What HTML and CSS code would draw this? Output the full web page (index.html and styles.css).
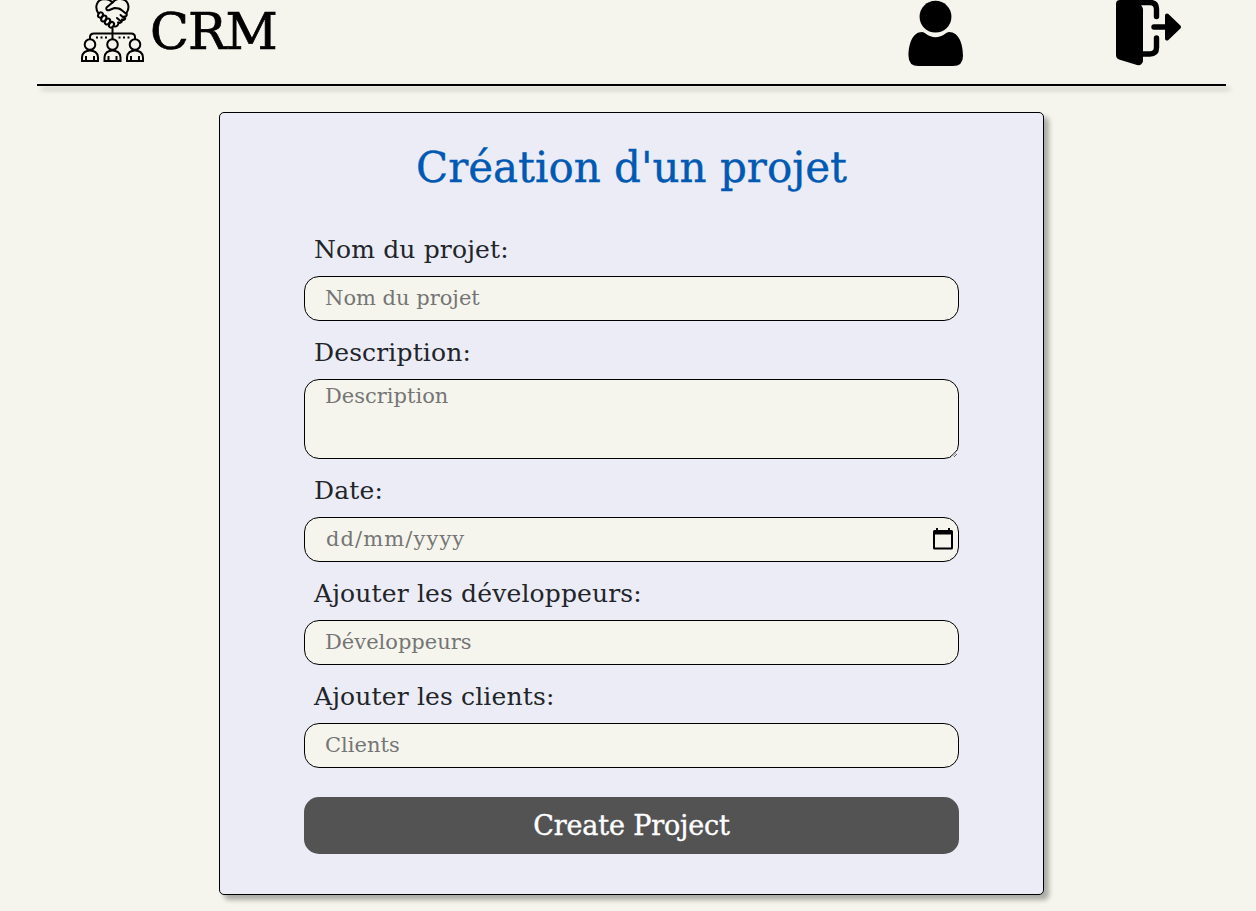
FILE: index.html
```html
<!DOCTYPE html>
<html lang="fr">
<head>
<meta charset="utf-8">
<title>CRM</title>
<link rel="stylesheet" href="styles.css">
</head>
<body>
<header class="header">
  <a class="brand">
    <svg class="brand-icon" width="66" height="66" viewBox="0 0 66 66" fill="none" stroke="#000" stroke-width="2" stroke-linecap="round" stroke-linejoin="round">
      <path d="M19.500 13.500C15 7 18-.5 25-1c4 0 6 1 8.500 3.500C36-.5 39-1.500 42-1c7 .5 9.500 8 5.500 14"/>
      <path d="M33.500 2.500l-6 5c-1 2 1 3.500 3 2.500l5-2c3 0 5 0 7 2l5 4M47.500 13.500c1 2-.5 3.500-2.500 3M46 16.500c1 3-1 4-3 3M43 19.500c.5 3-2 4-4 3M39.500 22.500c0 3-2 4.500-4.500 4M41.500 15l3.500 3M38 18l3.500 3"/>
      <ellipse cx="21.500" cy="15" rx="2.200" ry="2.800" transform="rotate(35 21.500 15)"/>
      <ellipse cx="24.800" cy="18.500" rx="2.200" ry="3.200" transform="rotate(35 24.800 18.500)"/>
      <ellipse cx="28.500" cy="21.500" rx="2.200" ry="3.200" transform="rotate(35 28.500 21.500)"/>
      <ellipse cx="32.500" cy="24.800" rx="2.200" ry="3" transform="rotate(35 32.500 24.800)"/>
      <path d="M33.500 28v11M11 39v-2q0-3.500 4-3.500h37q4 0 4 3.500v2"/>
      <path d="M17 37.500h11.500M39.500 37.500h11.500" stroke-dasharray="2 2.500" stroke-linecap="butt"/>
      <g id="person">
        <circle cx="11" cy="44.500" r="5.300"/>
        <path d="M3 61v-3.500c0-9.500 16-9.500 16 0V61zM7 56v5M15 56v5" stroke-linecap="butt" stroke-linejoin="miter"/>
      </g>
      <use href="#person" x="22.500"/>
      <use href="#person" x="45"/>
    </svg>
    <span class="brand-name">CRM</span>
  </a>
  <nav class="nav">
    <svg width="56" height="67" viewBox="0 0 56 67">
      <circle cx="27.500" cy="16.700" r="15.900"/>
      <path d="M14 32q2 0 3.500 1.500 10 7.500 20 0Q39 32 41 32c10 0 14 12 14 24q0 10-10 10H10.500Q.5 66 .5 56C.5 43 5 32 14 32z"/>
    </svg>
    <svg width="67" height="67" viewBox="0 0 67 67">
      <path d="M1 4q0-4 4-4h16q6 5 7 9v52q-1 5-6 4L4 59.500Q1 58 1 55z"/>
      <path d="M21 2.500h14q6.500 0 6.500 6.500v7.500M28 54h7q6.500 0 6.500-6.500V38M39 27h12" fill="none" stroke="#000" stroke-width="5.400" stroke-linecap="round"/>
      <path d="M52 15.500L64 27 52 38.500z" stroke="#000" stroke-width="4" stroke-linejoin="round"/>
    </svg>
  </nav>
</header>
<div class="divider"></div>
<main class="card">
  <h1 class="title">Création d'un projet</h1>
  <form class="form">
    <label class="label" for="name">Nom du projet:</label>
    <input class="field" id="name" type="text" placeholder="Nom du projet">
    <label class="label" for="desc">Description:</label>
    <textarea class="field area" id="desc" placeholder="Description"></textarea>
    <label class="label" for="date">Date:</label>
    <div class="field date" id="date">
      <span class="date-text">dd/mm/yyyy</span>
      <svg width="20" height="22" viewBox="0 0 20 22">
        <path d="M3 0h2v2h10V0h2v2h1.500q1.500 0 1.500 1.500v16.500q0 1.500-1.500 1.500h-17Q0 21.500 0 20V3.500Q0 2 1.500 2H3zM2 6.500v13h16v-13z" fill-rule="evenodd"/>
      </svg>
    </div>
    <label class="label" for="devs">Ajouter les développeurs:</label>
    <input class="field" id="devs" type="text" placeholder="Développeurs">
    <label class="label" for="clients">Ajouter les clients:</label>
    <input class="field" id="clients" type="text" placeholder="Clients">
    <button class="submit" type="button">Create Project</button>
  </form>
</main>
</body>
</html>
```
FILE: styles.css
```css
* {
  box-sizing: border-box;
}

body {
  margin: 0;
  height: 911px;
  overflow: hidden;
  background: #f5f5ed;
  color: #212529;
  font-family: "DejaVu Serif", serif;
}

.header {
  display: flex;
  justify-content: space-between;
  align-items: flex-start;
  height: 84px;
  margin: 0 30px 0 37px;
  padding: 0 43px 0 42px;
}

.divider {
  height: 2px;
  margin: 0 30px 0 37px;
  background: #000;
  box-shadow: 4px 4px 5px rgba(0, 0, 0, 0.25);
}

.brand {
  display: flex;
  gap: 5px;
  color: #000;
}

.brand-name {
  font-size: 51px;
  line-height: 63px;
  letter-spacing: -1px;
  -webkit-text-stroke: 0.7px #000;
}

.nav {
  display: flex;
  gap: 151px;
  margin-right: 1px;
}

.card {
  width: 825px;
  height: 783px;
  margin: 26px 0 0 219px;
  padding: 24px 84px 0;
  background: #ececf6;
  border: 1px solid #000;
  border-radius: 5px;
  box-shadow: 5px 5px 5px rgba(0, 0, 0, 0.3);
}

.title {
  margin: 0;
  height: 81px;
  color: #0059b3;
  font-size: 42px;
  font-weight: 400;
  line-height: 62px;
  text-align: center;
  white-space: nowrap;
  -webkit-text-stroke: 0.4px #0059b3;
}

.form {
  display: flex;
  flex-direction: column;
}

.label {
  height: 58px;
  padding-left: 10px;
  font-size: 25px;
  line-height: 64px;
  letter-spacing: 0.15px;
  white-space: nowrap;
}

.field {
  width: 655px;
  height: 45px;
  margin: 0;
  padding: 0 20px 1px;
  background: #f5f5ed;
  border: 1px solid #000;
  border-radius: 15px;
  color: #757575;
  font: inherit;
  font-size: 21px;
  outline: none;
}

.field::placeholder {
  color: #757575;
  opacity: 1;
}

.area {
  display: block;
  height: 80px;
  padding-top: 4px;
}

.date {
  display: flex;
  align-items: center;
  justify-content: space-between;
  padding: 0 5px 2px 21px;
}

.date-text {
  letter-spacing: 1.1px;
}

.date svg {
  fill: #000;
}

.submit {
  width: 655px;
  height: 57px;
  margin-top: 29px;
  padding: 0;
  background: #535354;
  border: 0;
  border-radius: 15px;
  color: #fff;
  font: inherit;
  font-size: 27px;
  letter-spacing: -0.15px;
  -webkit-text-stroke: 0.4px #fff;
}
```
